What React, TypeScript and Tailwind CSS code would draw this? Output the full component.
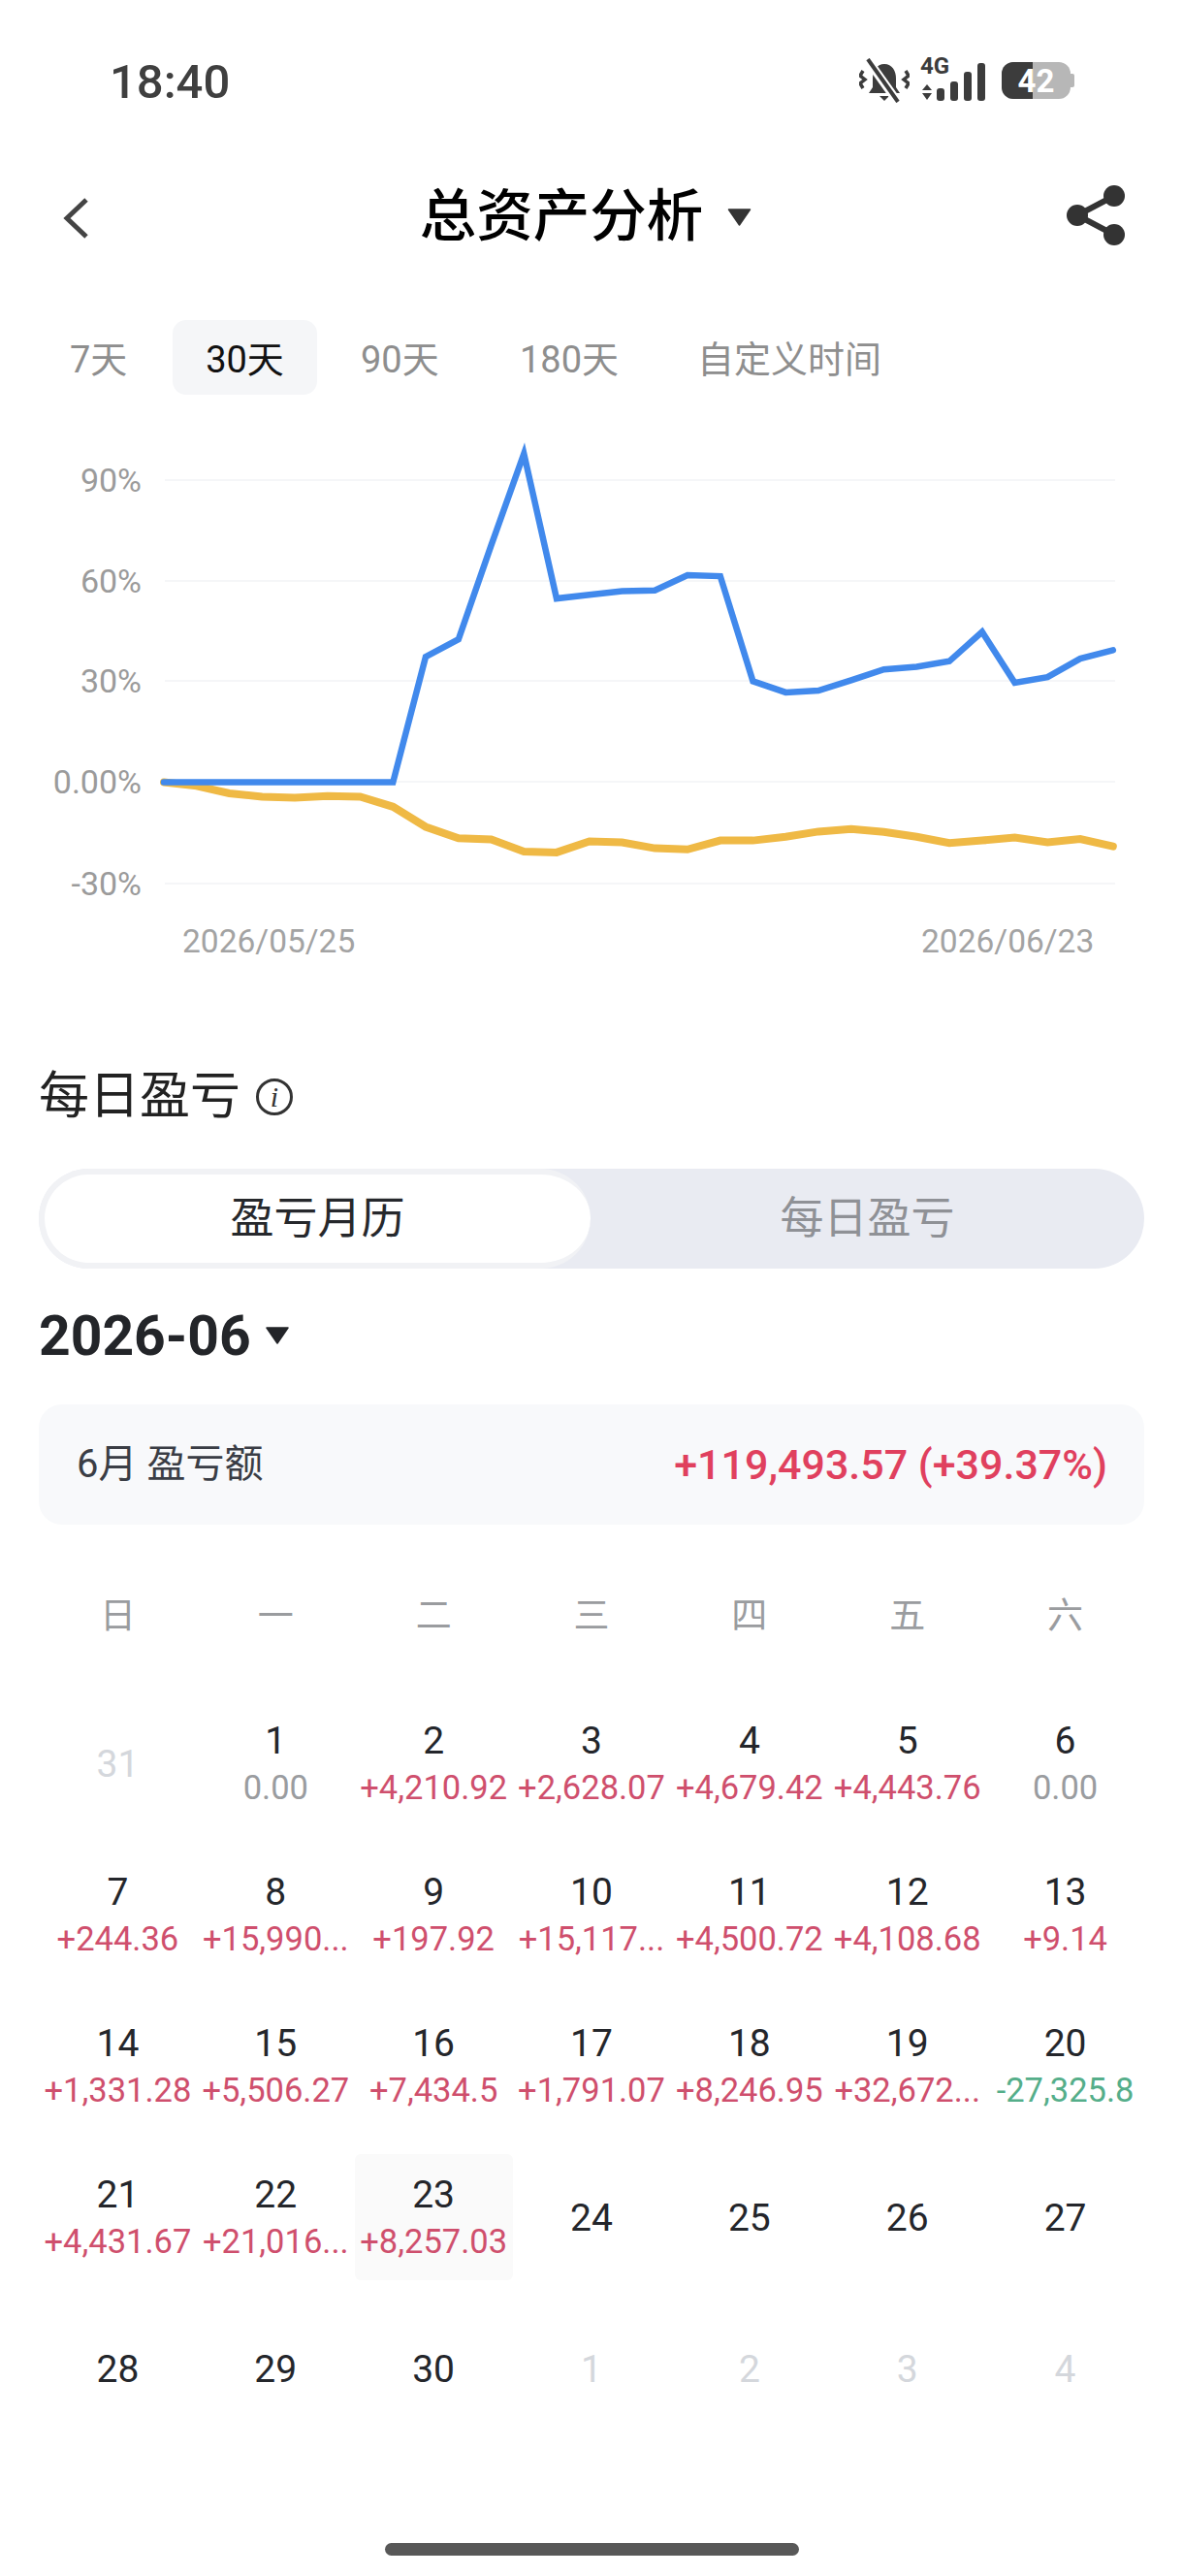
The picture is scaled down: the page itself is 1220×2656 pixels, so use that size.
import React from 'react';

const blueY = [1010, 1010, 1010, 1010, 1010, 1010, 1010, 1010, 672, 625, 372, 125, 515, 505, 495, 493, 452, 455, 738, 768, 763, 735, 706, 699, 684, 605, 742, 727, 677, 654];
const orangeY = [1010, 1020, 1040, 1049, 1052, 1047, 1049, 1076, 1130, 1161, 1164, 1197, 1199, 1169, 1172, 1188, 1191, 1167, 1167, 1157, 1143, 1136, 1144, 1157, 1174, 1167, 1159, 1172, 1163, 1183];

// zoom coordinates to chart pixels
const toPoints = (ys: number[]) =>
  ys.map((y, i) => `${(169 + i * 33.75).toFixed(1)},${(y / 2.613).toFixed(1)}`).join(' ');

const gridLines = [
  { y: 75, label: '90%' },
  { y: 179, label: '60%' },
  { y: 282, label: '30%' },
  { y: 386, label: '0.00%' },
  { y: 491, label: '-30%' },
];

type Day = { d: number | string; v?: string; tone?: 'red' | 'green' | 'gray'; muted?: boolean; today?: boolean };

const days: Day[] = [
  { d: 31, muted: true },
  { d: 1, v: '0.00', tone: 'gray' },
  { d: 2, v: '+4,210.92', tone: 'red' },
  { d: 3, v: '+2,628.07', tone: 'red' },
  { d: 4, v: '+4,679.42', tone: 'red' },
  { d: 5, v: '+4,443.76', tone: 'red' },
  { d: 6, v: '0.00', tone: 'gray' },
  { d: 7, v: '+244.36', tone: 'red' },
  { d: 8, v: '+15,990...', tone: 'red' },
  { d: 9, v: '+197.92', tone: 'red' },
  { d: 10, v: '+15,117...', tone: 'red' },
  { d: 11, v: '+4,500.72', tone: 'red' },
  { d: 12, v: '+4,108.68', tone: 'red' },
  { d: 13, v: '+9.14', tone: 'red' },
  { d: 14, v: '+1,331.28', tone: 'red' },
  { d: 15, v: '+5,506.27', tone: 'red' },
  { d: 16, v: '+7,434.5', tone: 'red' },
  { d: 17, v: '+1,791.07', tone: 'red' },
  { d: 18, v: '+8,246.95', tone: 'red' },
  { d: 19, v: '+32,672...', tone: 'red' },
  { d: 20, v: '-27,325.8', tone: 'green' },
  { d: 21, v: '+4,431.67', tone: 'red' },
  { d: 22, v: '+21,016...', tone: 'red' },
  { d: 23, v: '+8,257.03', tone: 'red', today: true },
  { d: 24 },
  { d: 25 },
  { d: 26 },
  { d: 27 },
  { d: 28 },
  { d: 29 },
  { d: 30 },
  { d: 1, muted: true },
  { d: 2, muted: true },
  { d: 3, muted: true },
  { d: 4, muted: true },
];

const toneClass = {
  red: 'text-[#cf4f6d]',
  green: 'text-[#55ae8a]',
  gray: 'text-[#9a9c9f]',
};

const Caret = ({ className }: { className: string }) => (
  <svg viewBox="0 0 24 18" className={className}>
    <path d="M1 1 H23 L12 17 Z" fill="currentColor" stroke="currentColor" strokeWidth="1.5" strokeLinejoin="round" />
  </svg>
);

const StatusBar = () => (
  <div className="flex h-[166px] items-center justify-between pl-[113px] pr-[112px]">
    <span className="pt-[2px] text-[49px] font-medium leading-none text-[#3f3f3f]">18:40</span>
    <div className="flex items-center">
      <svg viewBox="0 0 52 46" className="h-[46px] w-[52px] text-[#3c3c3c]">
        <path d="M26 6 C34 6 38 13 38 21 V30 L42 36 H10 L14 30 V21 C14 13 18 6 26 6 Z" fill="currentColor" />
        <path d="M21 39 H31 L26 44 Z" fill="currentColor" />
        <path d="M4 13 L1 18 L6 22 L1 26 L4 31 M48 13 L51 18 L46 22 L51 26 L48 31" fill="none" stroke="currentColor" strokeWidth="3.5" />
        <path d="M9 2 L39 44" stroke="#ffffff" strokeWidth="9" />
        <path d="M9 1 L40 45" stroke="currentColor" strokeWidth="4" />
      </svg>
      <div className="relative ml-[11px] h-[46px] w-[68px]">
        <span className="absolute left-0 top-[-4px] text-[24px] font-bold leading-none text-[#3c3c3c]">4G</span>
        <svg viewBox="0 0 68 46" className="h-[46px] w-[68px] text-[#3c3c3c]">
          <path d="M7 27 L12 33 H2 Z M2 36 H12 L7 43 Z" fill="currentColor" />
          <rect x="17" y="31" width="8" height="13" rx="3" fill="currentColor" />
          <rect x="31" y="24" width="8" height="20" rx="3" fill="currentColor" />
          <rect x="45" y="14" width="8" height="30" rx="3" fill="currentColor" />
          <rect x="59" y="5" width="8" height="39" rx="3" fill="currentColor" />
        </svg>
      </div>
      <div className="ml-[16px] flex items-center">
        <div className="relative h-[38px] w-[71px] overflow-hidden rounded-[12px] bg-[#b7b7b7]">
          <div className="h-full w-[32px] bg-[#3c3c3c]" />
          <span className="absolute inset-0 flex items-center justify-center text-[33px] font-bold leading-none text-white">42</span>
        </div>
        <div className="h-[14px] w-[4px] rounded-r-[2px] bg-[#b7b7b7]" />
      </div>
    </div>
  </div>
);

const Header = () => (
  <div className="flex h-[112px] items-center justify-between pl-[64px] pr-[60px]">
    <svg viewBox="0 0 28 42" className="mt-[6px] h-[42px] w-[28px] text-[#444444]">
      <path d="M25 2 L5 21 L25 40" fill="none" stroke="currentColor" strokeWidth="5" />
    </svg>
    <div className="ml-[16px] flex items-center pt-[3px]">
      <span className="text-[58.5px] font-medium leading-none text-black">总资产分析</span>
      <Caret className="ml-[25px] h-[18px] w-[25px] text-[#333333]" />
    </div>
    <svg viewBox="0 0 60 62" className="h-[62px] w-[60px] text-[#333333]">
      <path d="M49 11 L11 31 L49 51" fill="none" stroke="currentColor" strokeWidth="6" />
      <circle cx="49" cy="11" r="11" fill="currentColor" />
      <circle cx="11" cy="31" r="11" fill="currentColor" />
      <circle cx="49" cy="51" r="11" fill="currentColor" />
    </svg>
  </div>
);

const RangeTabs = () => (
  <div className="mt-[52px] flex h-[77px] items-center pl-[55px] text-[38px] leading-none text-[#8e8e8e]">
    <span className="w-[123px] pl-[17px] pt-[5px]">7天</span>
    <span className="flex h-full w-[149px] items-center justify-center rounded-[14px] bg-[#f5f6f8] pt-[5px] text-[#111111]">30天</span>
    <span className="ml-[45px] w-[164px] pt-[5px]">90天</span>
    <span className="w-[183px] pt-[5px]">180天</span>
    <span className="pt-[5px]">自定义时间</span>
  </div>
);

const Chart = () => (
  <svg viewBox="0 0 1220 600" className="mt-[13px] block h-[600px] w-[1220px]">
    {gridLines.map((g) => (
      <g key={g.label}>
        <line x1="170" x2="1150" y1={g.y} y2={g.y} stroke="#f5f6f8" strokeWidth="2" />
        <text x="146" y={g.y + 12} textAnchor="end" fontSize="34" fill="#9b9b9b">
          {g.label}
        </text>
      </g>
    ))}
    <polyline points={toPoints(orangeY)} fill="none" stroke="#efb945" strokeWidth="8" strokeLinejoin="miter" strokeLinecap="round" />
    <polyline points={toPoints(blueY)} fill="none" stroke="#4189ec" strokeWidth="6.5" strokeLinejoin="miter" strokeLinecap="round" />
    <text x="188" y="562" fontSize="33.5" fill="#a3a3a3">2026/05/25</text>
    <text x="950" y="562" fontSize="33.5" fill="#a3a3a3">2026/06/23</text>
  </svg>
);

const DayCell = ({ day }: { day: Day }) => (
  <div className={`flex h-[130px] flex-col items-center justify-center pt-[2px] ${day.today ? 'rounded-[6px] bg-[#fafafa]' : ''}`}>
    <span className={`text-[39px] leading-[46px] ${day.muted ? 'text-[#d4d7dc]' : 'text-[#24262b]'}`}>{day.d}</span>
    {day.v && (
      <span className={`mt-[2px] whitespace-nowrap text-[34.5px] leading-[46px] ${toneClass[day.tone ?? 'gray']}`}>{day.v}</span>
    )}
  </div>
);

export default function App() {
  return (
    <div className="h-[2656px] w-[1220px] overflow-hidden bg-white font-[Roboto,'Noto_Sans_CJK_SC',sans-serif]">
      <StatusBar />
      <Header />
      <RangeTabs />
      <Chart />

      <div className="mx-[40px]">
        <div className="mt-[81px] flex h-[60px] items-center">
          <span className="text-[52px] leading-none text-[#222222]">每日盈亏</span>
          <span className="ml-[16px] flex h-[38px] w-[38px] items-center justify-center rounded-full border-[3px] border-[#333333] font-['Liberation_Serif',serif] text-[30px] italic leading-none text-[#333333]">i</span>
        </div>

        <div className="mt-[44px] flex h-[103px] rounded-full bg-[#e9ebf2]">
          <div className="flex h-full w-[569px] items-center justify-center rounded-full border-[6px] border-r-0 border-[#f1f2f5] bg-white text-[45px] leading-none text-[#26282c]">盈亏月历</div>
          <div className="flex flex-1 items-center justify-center text-[45px] leading-none text-[#8f9196]">每日盈亏</div>
        </div>

        <div className="mt-[39px] flex h-[60px] items-center">
          <span className="text-[57px] font-bold leading-none text-[#232529]">2026-06</span>
          <Caret className="ml-[15px] h-[18px] w-[24px] text-[#232529]" />
        </div>

        <div className="mt-[41px] flex h-[124px] items-center justify-between rounded-[24px] bg-[#f8f9fb] pl-[39px] pr-[38px]">
          <span className="text-[40px] leading-none text-[#3a3d45]">6月 盈亏额</span>
          <span className="text-[43px] font-medium leading-none text-[#e0405e]">+119,493.57 (+39.37%)</span>
        </div>

        <div className="mt-[64px] grid h-[60px] grid-cols-7 items-center text-center text-[37px] leading-none text-[#9a9c9f]">
          {['日', '一', '二', '三', '四', '五', '六'].map((w) => (
            <span key={w}>{w}</span>
          ))}
        </div>

        <div className="mt-[57px] grid grid-cols-7 gap-y-[26px]">
          {days.map((day, i) => (
            <DayCell key={i} day={day} />
          ))}
        </div>
      </div>

      <div className="mx-auto mt-[115px] h-[13px] w-[427px] rounded-full bg-[#585858]" />
    </div>
  );
}
